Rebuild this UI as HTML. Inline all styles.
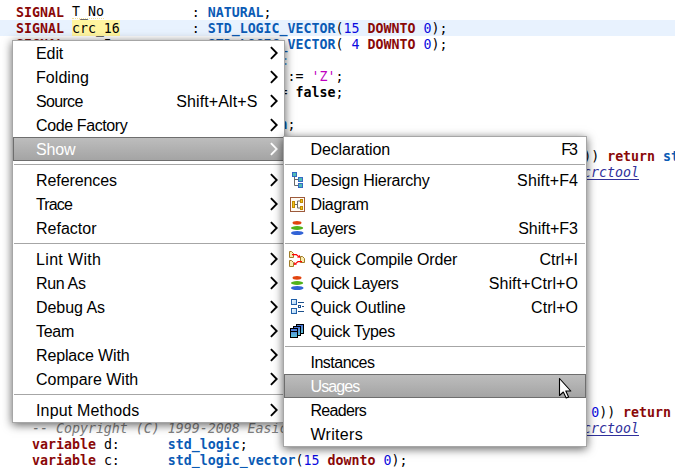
<!DOCTYPE html>
<html><head><meta charset="utf-8"><title>Context menu</title>
<style>
html,body{margin:0;padding:0;}
body{width:675px;height:468px;overflow:hidden;background:#fff;position:relative;}
.code{position:absolute;left:0;top:0;width:675px;height:468px;overflow:hidden;font-family:"DejaVu Sans Mono","Liberation Mono",monospace;font-size:13.288px;color:#000;}
.ln{position:absolute;left:16px;height:16px;line-height:16px;white-space:pre;}
.kw{color:#8a0808;font-weight:bold;}
.ty{color:#0b5bb5;font-weight:bold;}
.num{color:#0a0ae0;}
.str{color:#c000c0;}
.cm{color:#808080;font-style:italic;}
.lk{color:#30309c;font-style:italic;text-decoration:underline;text-underline-offset:2px;text-decoration-thickness:1px;}
.b{font-weight:bold;}
.fa{color:#5a9ad8;}
.hl{position:absolute;left:0;top:20px;width:675px;height:16px;background:#e8f2fe;}
.occ{background:#fff5a0;display:inline-block;height:15.500px;line-height:16px;vertical-align:top;margin-top:-1px;padding-top:1px;box-sizing:border-box;}
.warn{border-bottom:1px dotted #f3e29a;display:inline-block;height:13px;line-height:14px;vertical-align:top;}
.menu{position:absolute;box-sizing:border-box;background:#fff;border:1px solid #a6a6a6;box-shadow:0 2px 9px rgba(0,0,0,.62);font-family:"Liberation Sans","DejaVu Sans",sans-serif;font-size:16px;color:#000;}
.it{position:absolute;left:0;right:0;height:24px;line-height:24px;white-space:nowrap;}
.it .t{position:absolute;left:23px;top:1px;}
.it .k{position:absolute;right:26.500px;top:1px;}
.m2 .it .t{left:26.500px;}
.m2 .it .k{right:8px;}
.it .a{position:absolute;right:5px;top:5px;width:9px;height:14px;}
.sel{background:linear-gradient(#bebebe,#a3a3a3);box-shadow:inset 0 0 0 1px #6e6e6e;color:#fff;}
.sep{position:absolute;left:1px;right:1px;height:1px;background:#a6a6a6;}
.ic{position:absolute;left:6px;top:4px;width:16px;height:16px;overflow:visible;}
.cur{position:absolute;left:558px;top:377px;width:14px;height:22px;}
</style></head><body>
<div class="code">
<div class="hl"></div>
<div class="ln" style="top:5px"><span class="kw">SIGNAL</span> <span class="warn">T_No</span>           : <span class="ty">NATURAL</span>;</div>
<div class="ln" style="top:21px"><span class="kw">SIGNAL</span> <span class="occ">crc_16</span>         : <span class="ty">STD_LOGIC_VECTOR</span>(<span class="num">15</span> <span class="kw">DOWNTO</span> <span class="num">0</span>);</div>
<div class="ln" style="top:37px"><span class="kw">SIGNAL</span> crc_5          : <span class="ty">STD_LOGIC_VECTOR</span>( <span class="num">4</span> <span class="kw">DOWNTO</span> <span class="num">0</span>);</div>
<div class="ln" style="top:53px">                                 <span class="fa" style="margin-left:2px">:</span></div>
<div class="ln" style="top:69px"><span class="kw">SIGNAL</span> data_o         : <span class="ty">STD_LOGIC</span> := <span class="str">'Z'</span>;</div>
<div class="ln" style="top:85px"><span class="kw">SIGNAL</span> busy           : <span class="ty">BOOLEAN</span> := <span class="b">false</span>;</div>
<div class="ln" style="top:117px"><span class="kw">SIGNAL</span> period         : <span class="ty">T_Duration</span>;</div>
<div class="ln" style="top:149px"><span class="kw">function</span> next_crc5 (data:  <span class="ty">std_logic</span>;  crc: <span class="ty">std_logic_vector</span>(<span class="num">4</span> <span class="kw">downto</span> <span class="num">0</span>)) <span class="kw">return</span> <span class="ty">std_logic_vector</span></div>
<div class="ln" style="top:165px">  <span class="cm">-- Copyright (C) 1999-2008 Easics NV. </span><span class="lk">www.easics.com/webtools/online/crctool</span></div>
<div class="ln" style="top:405px"><span class="kw">function</span> next_crc16 (data:  <span class="ty">std_logic</span>;  crc: <span class="ty">std_logic_vector</span>(<span class="num">15</span> <span class="kw">downto</span> <span class="num">0</span>)) <span class="kw">return</span> <span class="ty">std_logic_vector</span></div>
<div class="ln" style="top:421px">  <span class="cm">-- Copyright (C) 1999-2008 Easics NV. </span><span class="lk">www.easics.com/webtools/online/crctool</span></div>
<div class="ln" style="top:437px">  <span class="kw">variable</span> d:      <span class="ty">std_logic</span>;</div>
<div class="ln" style="top:453px">  <span class="kw">variable</span> c:      <span class="ty">std_logic_vector</span>(<span class="num">15</span> <span class="kw">downto</span> <span class="num">0</span>);</div>
</div>

<div class="menu m1" style="left:12px;top:40px;width:273px;height:383px;">
<div class="it" style="top:0px"><span class="t" style="letter-spacing:-0.09px">Edit</span><svg class="a" viewBox="0 0 9 14"><path d="M0.900 1.100 L6.700 7 L0.900 12.900" fill="none" stroke="#000" stroke-width="1.85"/></svg></div>
<div class="it" style="top:24px"><span class="t" style="letter-spacing:0.06px">Folding</span><svg class="a" viewBox="0 0 9 14"><path d="M0.900 1.100 L6.700 7 L0.900 12.900" fill="none" stroke="#000" stroke-width="1.85"/></svg></div>
<div class="it" style="top:48px"><span class="t" style="letter-spacing:-0.68px">Source</span><span class="k" style="letter-spacing:0.13px;margin-right:-0.13px">Shift+Alt+S</span><svg class="a" viewBox="0 0 9 14"><path d="M0.900 1.100 L6.700 7 L0.900 12.900" fill="none" stroke="#000" stroke-width="1.85"/></svg></div>
<div class="it" style="top:72px"><span class="t" style="letter-spacing:-0.39px">Code Factory</span><svg class="a" viewBox="0 0 9 14"><path d="M0.900 1.100 L6.700 7 L0.900 12.900" fill="none" stroke="#000" stroke-width="1.85"/></svg></div>
<div class="it sel" style="top:96px"><span class="t" style="letter-spacing:-0.17px">Show</span><svg class="a" viewBox="0 0 9 14"><path d="M0.900 1.100 L6.700 7 L0.900 12.900" fill="none" stroke="#fff" stroke-width="1.85"/></svg></div>
<div class="it" style="top:127px"><span class="t" style="letter-spacing:-0.08px">References</span><svg class="a" viewBox="0 0 9 14"><path d="M0.900 1.100 L6.700 7 L0.900 12.900" fill="none" stroke="#000" stroke-width="1.85"/></svg></div>
<div class="it" style="top:151px"><span class="t" style="letter-spacing:-0.88px">Trace</span><svg class="a" viewBox="0 0 9 14"><path d="M0.900 1.100 L6.700 7 L0.900 12.900" fill="none" stroke="#000" stroke-width="1.85"/></svg></div>
<div class="it" style="top:175px"><span class="t">Refactor</span><svg class="a" viewBox="0 0 9 14"><path d="M0.900 1.100 L6.700 7 L0.900 12.900" fill="none" stroke="#000" stroke-width="1.85"/></svg></div>
<div class="it" style="top:206px"><span class="t" style="letter-spacing:0.34px">Lint With</span><svg class="a" viewBox="0 0 9 14"><path d="M0.900 1.100 L6.700 7 L0.900 12.900" fill="none" stroke="#000" stroke-width="1.85"/></svg></div>
<div class="it" style="top:230px"><span class="t" style="letter-spacing:-0.34px">Run As</span><svg class="a" viewBox="0 0 9 14"><path d="M0.900 1.100 L6.700 7 L0.900 12.900" fill="none" stroke="#000" stroke-width="1.85"/></svg></div>
<div class="it" style="top:254px"><span class="t" style="letter-spacing:-0.04px">Debug As</span><svg class="a" viewBox="0 0 9 14"><path d="M0.900 1.100 L6.700 7 L0.900 12.900" fill="none" stroke="#000" stroke-width="1.85"/></svg></div>
<div class="it" style="top:278px"><span class="t" style="letter-spacing:-0.27px">Team</span><svg class="a" viewBox="0 0 9 14"><path d="M0.900 1.100 L6.700 7 L0.900 12.900" fill="none" stroke="#000" stroke-width="1.85"/></svg></div>
<div class="it" style="top:302px"><span class="t" style="letter-spacing:-0.14px">Replace With</span><svg class="a" viewBox="0 0 9 14"><path d="M0.900 1.100 L6.700 7 L0.900 12.900" fill="none" stroke="#000" stroke-width="1.85"/></svg></div>
<div class="it" style="top:326px"><span class="t">Compare With</span><svg class="a" viewBox="0 0 9 14"><path d="M0.900 1.100 L6.700 7 L0.900 12.900" fill="none" stroke="#000" stroke-width="1.85"/></svg></div>
<div class="it" style="top:357px"><span class="t" style="letter-spacing:0.16px">Input Methods</span><svg class="a" viewBox="0 0 9 14"><path d="M0.900 1.100 L6.700 7 L0.900 12.900" fill="none" stroke="#000" stroke-width="1.85"/></svg></div>
<div class="sep" style="top:123px"></div>
<div class="sep" style="top:202px"></div>
<div class="sep" style="top:353px"></div>
</div>

<div class="menu m2" style="left:283px;top:136px;width:304px;height:311px;">
<div class="it" style="top:0px"><span class="t" style="letter-spacing:-0.13px">Declaration</span><span class="k" style="letter-spacing:-1.9px;margin-right:1.9px">F3</span></div>
<div class="it" style="top:31px"><svg class="ic" viewBox="0 0 16 16"><path d="M4.500 5 V13.500 H8 M4.500 7.500 H8" fill="none" stroke="#6a6a6a" stroke-width="1"/><rect x="2.500" y="0.500" width="4" height="4" fill="#4fbdb5" stroke="#3568c4"/><rect x="8.500" y="5.500" width="4" height="4" fill="#4fbdb5" stroke="#3568c4"/><rect x="8.500" y="11.500" width="4" height="4" fill="#4fbdb5" stroke="#3568c4"/></svg><span class="t" style="letter-spacing:-0.23px">Design Hierarchy</span><span class="k" style="letter-spacing:0.12px;margin-right:-0.12px">Shift+F4</span></div>
<div class="it" style="top:55px"><svg class="ic" viewBox="0 0 16 16"><rect x="0.500" y="1.500" width="14" height="14" fill="#fffaf2" stroke="#9c5a3c"/><path d="M5 8.500 H7.500 M7.500 5 V12 M7.500 5 H10 M7.500 12 H10" fill="none" stroke="#6a6a6a" stroke-width="1"/><rect x="2.500" y="5.500" width="2" height="6" fill="#f2c21a" stroke="#c08a00"/><rect x="10.500" y="3.500" width="2" height="3" fill="#f2c21a" stroke="#c08a00"/><rect x="10.500" y="10.500" width="2" height="3" fill="#f2c21a" stroke="#c08a00"/></svg><span class="t" style="letter-spacing:-0.37px">Diagram</span></div>
<div class="it" style="top:79px"><svg class="ic" viewBox="0 0 16 16"><ellipse cx="7" cy="2.800" rx="4.500" ry="1.900" fill="#e2440f"/><ellipse cx="7.100" cy="8" rx="6.100" ry="1.900" fill="#52b21c"/><ellipse cx="7.250" cy="13" rx="6.300" ry="2.050" fill="#3263d6"/></svg><span class="t" style="letter-spacing:-0.52px">Layers</span><span class="k" style="letter-spacing:-0.03px;margin-right:0.03px">Shift+F3</span></div>
<div class="it" style="top:110px"><svg class="ic" viewBox="0 0 16 16"><g fill="#f9ecb0" stroke="#a07c28"><path d="M-0.500 0.500 H1.500 L3.500 2.500 V6.500 H-0.500 Z"/><path d="M10.500 5.500 H12.500 L14.500 7.500 V11.500 H10.500 Z"/><path d="M-0.500 9.500 H1.500 L3.500 11.500 V15.500 H-0.500 Z"/></g><path d="M2 3.500 H6.300 L8.600 5.600" fill="none" stroke="#f00" stroke-width="1.250"/><path d="M10.200 6.800 L7 6.400 L9.800 3.800 Z" fill="#f00"/><path d="M12 10.500 H8 L5.600 12.600" fill="none" stroke="#f00" stroke-width="1.250"/><path d="M4 14 L4.300 10.900 L7 13.500 Z" fill="#f00"/></svg><span class="t" style="letter-spacing:-0.14px">Quick Compile Order</span><span class="k" style="letter-spacing:-0.04px;margin-right:0.04px">Ctrl+I</span></div>
<div class="it" style="top:134px"><svg class="ic" viewBox="0 0 16 16"><ellipse cx="7" cy="2.800" rx="4.500" ry="1.900" fill="#e2440f"/><ellipse cx="7.100" cy="8" rx="6.100" ry="1.900" fill="#52b21c"/><ellipse cx="7.250" cy="13" rx="6.300" ry="2.050" fill="#3263d6"/></svg><span class="t" style="letter-spacing:-0.46px">Quick Layers</span><span class="k" style="letter-spacing:0.12px;margin-right:-0.12px">Shift+Ctrl+O</span></div>
<div class="it" style="top:158px"><svg class="ic" viewBox="0 0 16 16"><defs><linearGradient id="og" x1="0" y1="0" x2="1" y2="1"><stop offset="0" stop-color="#ffffff"/><stop offset="1" stop-color="#9ccdf6"/></linearGradient></defs><rect x="1.500" y="0.500" width="5" height="5" fill="url(#og)" stroke="#1f5fa8"/><rect x="1.500" y="9.500" width="5" height="5" fill="url(#og)" stroke="#1f5fa8"/><path d="M8 3.500 H14 M8 12.500 H14 M12 7.500 H14" stroke="#1c508c" stroke-width="1" fill="none"/><rect x="8.500" y="6.500" width="2" height="2" fill="#fff" stroke="#1c508c"/></svg><span class="t" style="letter-spacing:-0.08px">Quick Outline</span><span class="k" style="letter-spacing:0.04px;margin-right:-0.04px">Ctrl+O</span></div>
<div class="it" style="top:182px"><svg class="ic" viewBox="0 0 16 16"><defs><linearGradient id="tg" x1="0" y1="0" x2="0" y2="1"><stop offset="0" stop-color="#4a6fd8"/><stop offset="1" stop-color="#5ecadc"/></linearGradient></defs><rect x="6.500" y="1.500" width="7" height="9" fill="url(#tg)" stroke="#000"/><rect x="3.500" y="3.500" width="7" height="9" fill="url(#tg)" stroke="#000"/><rect x="0.500" y="5.500" width="7" height="9" fill="url(#tg)" stroke="#000"/><path d="M0.500 8.500 H7.500" stroke="#000"/></svg><span class="t" style="letter-spacing:-0.31px">Quick Types</span></div>
<div class="it" style="top:213px"><span class="t" style="letter-spacing:-0.5px">Instances</span></div>
<div class="it sel" style="top:237px"><span class="t" style="letter-spacing:-0.92px">Usages</span></div>
<div class="it" style="top:261px"><span class="t" style="letter-spacing:-0.69px">Readers</span></div>
<div class="it" style="top:285px"><span class="t" style="letter-spacing:0.3px">Writers</span></div>
<div class="sep" style="top:27px"></div>
<div class="sep" style="top:106px"></div>
<div class="sep" style="top:209px"></div>
</div>
<svg class="cur" viewBox="0 0 14 22"><path d="M1.500 1.500 V18.500 L5.300 15 L8.200 21 L10.600 20 L7.800 14 H12.800 Z" fill="#fff" stroke="#000" stroke-width="1.1" stroke-linejoin="round"/></svg>
</body></html>
